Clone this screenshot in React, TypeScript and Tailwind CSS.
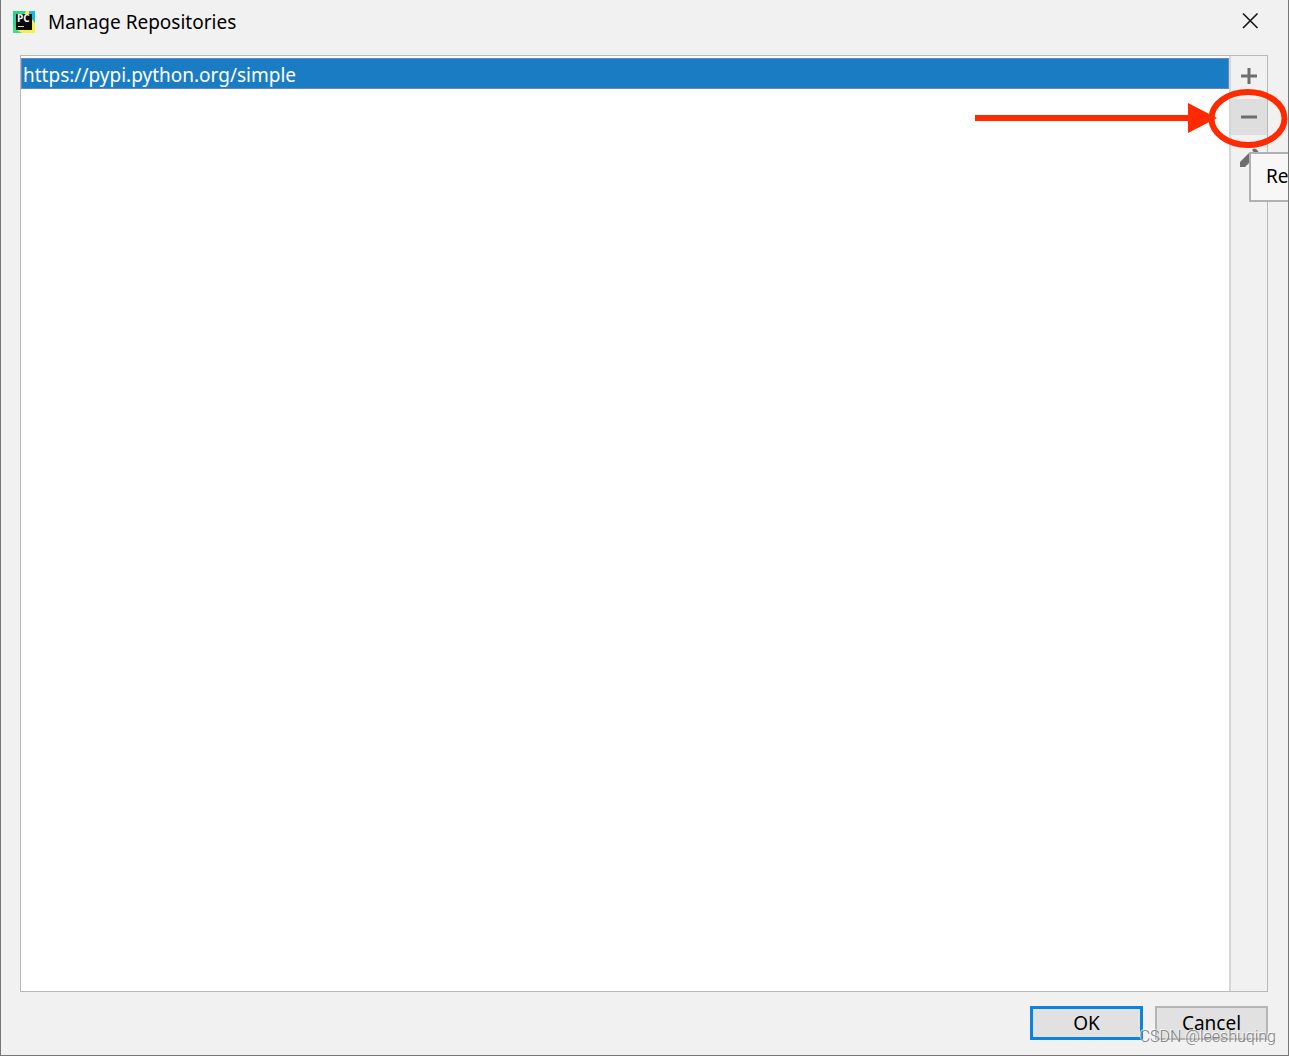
import { useState } from "react";

const repositories = ["https://pypi.python.org/simple"];

const toolClass = "flex h-9 w-9 items-center justify-center text-[#6e6e6e]";

function PyCharmLogo() {
  return (
    <svg width="24" height="24" viewBox="0 0 24 24" aria-hidden="true">
      <rect x="1" y="1" width="22" height="22" fill="#25d789" />
      <path d="M14 1 L17 1 L23 12 V23 H8 L3 21 Z" fill="#f4f14f" />
      <path d="M17 1 H23 V13 L17 5 Z" fill="#16b8e8" />
      <path d="M1 14 L5 20 L10 23 H1 Z" fill="#3be084" />
      <rect x="4" y="4" width="16" height="16" fill="#0a0a0a" />
      <text
        x="5"
        y="12"
        fill="#fff"
        fontFamily="Open Sans, sans-serif"
        fontSize="10"
        fontWeight="700"
      >
        PC
      </text>
      <rect x="6" y="16" width="6" height="1" fill="#d8d8d8" />
    </svg>
  );
}

function Callout() {
  return (
    <svg
      className="pointer-events-none absolute -top-3 -right-6 z-10"
      width="316"
      height="64"
      viewBox="0 0 316 64"
      fill="none"
      aria-hidden="true"
    >
      <path d="M0 31 H216" stroke="#ff2a00" strokeWidth="6" />
      <path d="M213 16 L242 31 L213 46 Z" fill="#ff2a00" />
      <ellipse cx="273" cy="31.5" rx="36.5" ry="26.5" stroke="#ff2a00" strokeWidth="6" />
    </svg>
  );
}

export default function App() {
  const [selected, setSelected] = useState(0);

  return (
    <div className="relative flex min-h-screen flex-col overflow-hidden border-x border-b border-[#777777] bg-[#f1f1f1] font-['Noto_Sans','Open_Sans',sans-serif] text-[19px] leading-7 text-black">
      <header className="flex h-[55px] items-start justify-between pt-2 pr-[29px] pl-[11px]">
        <div className="flex items-center gap-3">
          <PyCharmLogo />
          <h1>Manage Repositories</h1>
        </div>
        <button aria-label="Close" className="mt-1">
          <svg width="18" height="18" viewBox="0 0 18 18" stroke="#1a1a1a" strokeWidth="1.7">
            <path d="M2 1.5 L16.5 16 M16.5 1.5 L2 16" />
          </svg>
        </button>
      </header>

      <main className="mr-5 ml-[19px] flex flex-1 border border-[#b8b8b8]">
        <ul className="min-w-0 flex-1 bg-white pt-0.5">
          {repositories.map((url, i) => (
            <li key={url}>
              <button
                onClick={() => setSelected(i)}
                className={`block h-[31px] w-full border px-px pt-0.5 text-left ${
                  selected === i
                    ? "border-[#6a86c0] bg-[#1a7dc4] text-white"
                    : "border-transparent"
                }`}
              >
                {url}
              </button>
            </li>
          ))}
        </ul>

        <div className="flex w-[38px] flex-col items-center gap-[5px] border-l-2 border-[#d6d6d6] pt-0.5">
          <button aria-label="Add" className={toolClass}>
            <svg width="18" height="18" viewBox="0 0 18 18" stroke="currentColor" strokeWidth="3">
              <path d="M1 9 H17 M9 1 V17" />
            </svg>
          </button>
          <div className="relative">
            <button aria-label="Remove" className={`${toolClass} bg-[#dedede]`}>
              <svg width="18" height="18" viewBox="0 0 18 18" stroke="currentColor" strokeWidth="3">
                <path d="M1 9 H17" />
              </svg>
            </button>
            <Callout />
          </div>
          <div className="relative">
            <button aria-label="Edit" className={toolClass}>
              <svg width="20" height="20" viewBox="0 0 20 20" fill="currentColor">
                <path d="M1 19 V14 L10 5 L15 10 L6 19 Z" />
                <path d="M13 2 L14 1 Q15 0 17 1 L19 3 Q20 4 19 6 L17.5 7.5 Z" />
              </svg>
            </button>
            <div
              role="tooltip"
              className="absolute top-3 left-[18px] z-20 h-[50px] w-20 border-2 border-[#b0b0b0] bg-[#f7f7f7] px-[15px] py-2"
            >
              Re
            </div>
          </div>
        </div>
      </main>

      <footer className="flex justify-end gap-3 pt-[14px] pr-5 pb-[15px]">
        <button className="h-[34px] w-[113px] border-3 border-[#0a84e0] bg-[#e1e1e1] leading-7">
          OK
        </button>
        <button className="h-[34px] w-[113px] border-2 border-[#b5b5b5] bg-[#e1e1e1] leading-7">
          Cancel
        </button>
      </footer>

      <span className="pointer-events-none absolute right-3 bottom-2 font-['Roboto',sans-serif] text-base leading-5 font-light text-[#808080] [text-shadow:-1px_-1px_0_#ffffffcc]">
        CSDN @leeshuqing
      </span>
    </div>
  );
}
